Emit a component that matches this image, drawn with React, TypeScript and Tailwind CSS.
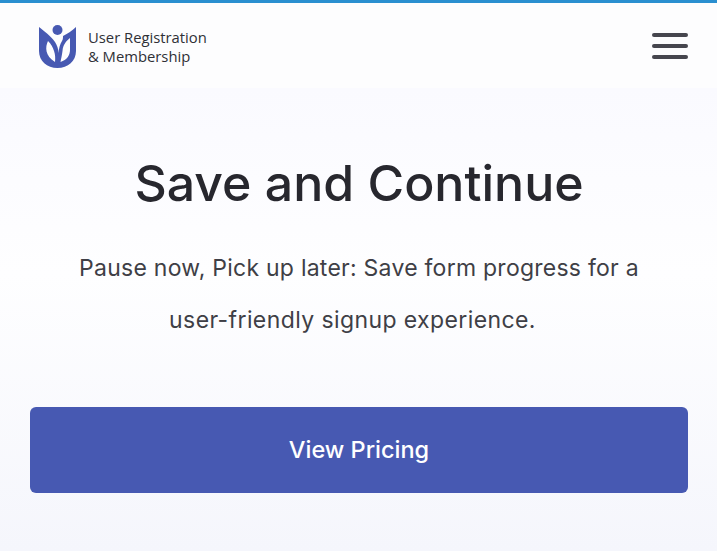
function Logo() {
  return (
    <svg width="38" height="44" viewBox="0 0 38 44" className="shrink-0">
      <circle cx="18.5" cy="6" r="5" fill="#4759b2" />
      <path
        fill="#4759b2"
        fillRule="evenodd"
        d="M0 3 C5 7 12 12 16 18 C18 21 19.5 25 19.5 29 C20 24 21 20 23 17 C23.5 16 24 15 24 13 L24 12 C28 10 33 7 37 3 L37 27 C37 37 29 44 18.5 44 C8 44 0 37 0 27 Z M9 17 C6 23 6 32 16 38 C17 31 15 23 9 17 Z M31 14 C27 17 24 21 23.5 27 C23 31 22 35 21.5 38 C28 36 31 31 31 26 Z"
      />
    </svg>
  );
}

export default function App() {
  return (
    <div className="h-[551px] w-[717px] overflow-hidden bg-white font-['Inter',sans-serif]">
      <div className="h-[3px] bg-[#2a8fd0]" />
      <header className="flex h-[85px] items-center justify-between bg-[#fdfdfe] pl-[39px] pr-[29px]">
        <div className="flex items-center gap-[11px]">
          <Logo />
          <div className="pt-[3px] font-['Open_Sans',sans-serif] text-[14.8px] font-medium leading-[19.5px] text-[#2f3036]">
            <div>User Registration</div>
            <div>&amp; Membership</div>
          </div>
        </div>
        <div className="flex w-[36px] flex-col gap-[7px]">
          <div className="h-[4px] rounded-full bg-[#46464e]" />
          <div className="h-[4px] rounded-full bg-[#46464e]" />
          <div className="h-[4px] rounded-full bg-[#46464e]" />
        </div>
      </header>
      <main className="flex h-[463px] flex-col items-center bg-gradient-to-b from-[#fafaff] via-[#fefeff] via-40% to-[#f5f6fc] pl-[30px] pr-[29px] pt-[62px]">
        <h1 className="text-[50px] font-medium leading-[66px] tracking-[0px] text-[#27272e]">Save and Continue</h1>
        <p className="mt-[26px] text-center text-[23px] leading-[52px] tracking-[0.25px] text-[#3f3f46]">
          Pause now, Pick up later: Save form progress for a
          <br />
          <span className="inline-block pr-[13px] tracking-[0.4px]">user-friendly signup experience.</span>
        </p>
        <button className="mt-[61px] flex h-[86px] w-full shrink-0 items-center justify-center rounded-[6px] bg-[#4759b2] text-[23.5px] font-medium text-white">
          View Pricing
        </button>
      </main>
    </div>
  );
}
